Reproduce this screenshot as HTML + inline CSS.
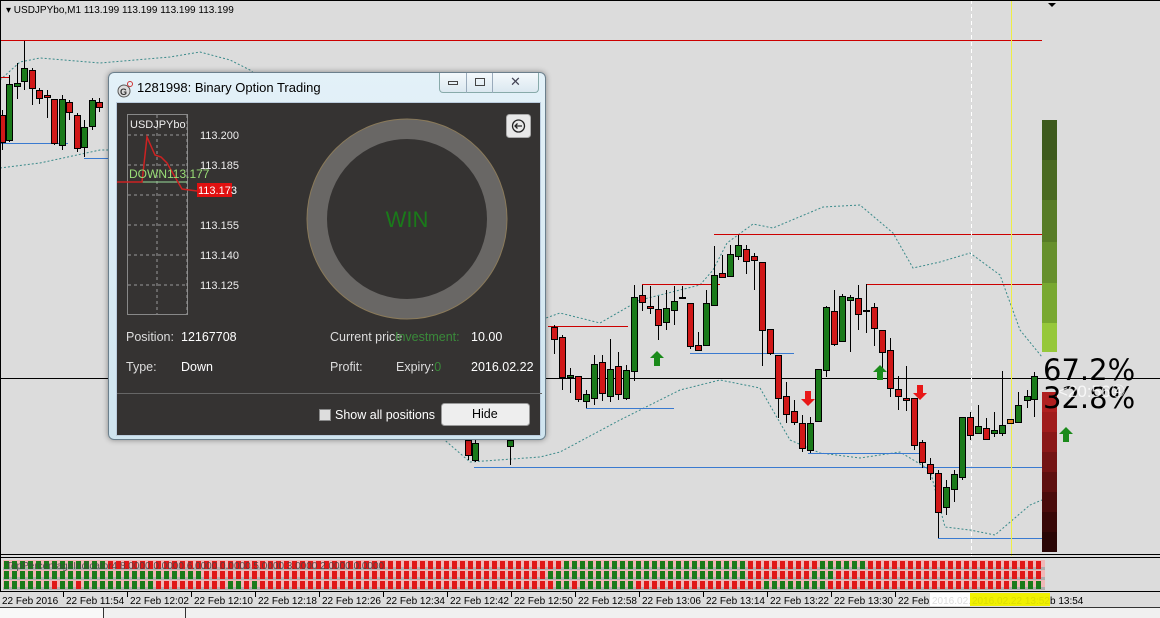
<!DOCTYPE html>
<html><head><meta charset="utf-8"><style>
*{margin:0;padding:0;box-sizing:border-box}
body{width:1160px;height:618px;overflow:hidden;background:#dcdcdc;font-family:"Liberation Sans",sans-serif;position:relative}
svg{position:absolute;left:0;top:0}
.dlg{position:absolute;left:108px;top:72px;width:438px;height:368px;background:linear-gradient(#e3f1f8,#cfe4ef);border:1px solid #6b7f8c;border-radius:6px;box-shadow:0 0 6px rgba(0,0,0,.4)}
.ttl{position:absolute;left:28px;top:7px;font-size:13px;color:#000}
.btns{position:absolute;right:6px;top:0;width:100px;height:20px;border:1px solid #8aa;border-top:none;border-radius:0 0 4px 4px;background:linear-gradient(#f4f9fc,#dbe8f0)}
.inner{position:absolute;left:7px;top:29px;width:425px;height:334px;background:#353332;border:1px solid #bcd}
.t{position:absolute;color:#ddd;font-size:12.5px;white-space:nowrap}
.w{color:#fff}
</style></head><body>
<svg id="s" width="1160" height="618"></svg>
<div class="dlg">
 <svg width="20" height="20" style="left:6px;top:6px"><circle cx="9" cy="12" r="6" fill="#ddd" stroke="#555"/><text x="5" y="16" font-size="9" font-weight="bold" fill="#333">G</text><circle cx="15" cy="5" r="2.5" fill="none" stroke="#c33"/></svg>
 <div class="ttl">1281998: Binary Option Trading</div>
 <div class="btns"><div style="position:absolute;left:8px;top:8px;width:10px;height:4px;border:1px solid #444"></div><div style="position:absolute;left:26px;top:0;width:1px;height:20px;background:#9ab"></div><div style="position:absolute;left:35px;top:5px;width:10px;height:8px;border:1px solid #444"></div><div style="position:absolute;left:52px;top:0;width:1px;height:20px;background:#9ab"></div><div style="position:absolute;left:70px;top:1px;font-size:13px;color:#445">✕</div></div>
 <div class="inner">
  <svg width="425" height="334">
   <rect x="10.5" y="11.5" width="60" height="200" fill="none" stroke="#888"/>
   <g stroke="#999" stroke-dasharray="3,3"><line x1="40" y1="12" x2="40" y2="211"/><line x1="70" y1="12" x2="70" y2="211"/>
   <line x1="11" y1="32" x2="70" y2="32"/><line x1="11" y1="62" x2="70" y2="62"/><line x1="11" y1="92" x2="70" y2="92"/><line x1="11" y1="122" x2="70" y2="122"/><line x1="11" y1="152" x2="70" y2="152"/><line x1="11" y1="182" x2="70" y2="182"/></g>
   <line x1="11" y1="79" x2="70" y2="79" stroke="#9d9"/>
   <polyline points="0,79 25,79 30,34 38,52 44,54 50,60 58,74 65,86 80,88" fill="none" stroke="#c22" stroke-width="1.5"/>
   <text x="13" y="25" font-size="11" fill="#eee" font-family="Liberation Sans">USDJPYbo</text>
   <text x="12" y="75" font-size="12" fill="#9d7">DOWN113.177</text>
   <g font-size="11" fill="#eee" font-family="Liberation Sans"><text x="83" y="36">113.200</text><text x="83" y="66">113.185</text><text x="83" y="126">113.155</text><text x="83" y="156">113.140</text><text x="83" y="186">113.125</text></g>
   <rect x="80" y="80" width="35" height="14" fill="#e01010"/><text x="81" y="91" font-size="11" fill="#fff">113.173</text>
   <circle cx="290" cy="116" r="90" fill="none" stroke="#696765" stroke-width="20"/>
   <circle cx="290" cy="116" r="100" fill="none" stroke="#8a7a5a" stroke-width="1"/>
   <text x="290" y="124" text-anchor="middle" font-size="22" fill="#1a7a1a">WIN</text>
   <rect x="389.5" y="11.5" width="24" height="23" rx="3" fill="#e8e8e8" stroke="#aaa"/>
   <circle cx="401.5" cy="23" r="6" fill="none" stroke="#222" stroke-width="1.3"/><path d="M405 23h-7M400.5 20.5l-2.5 2.5 2.5 2.5" stroke="#222" fill="none" stroke-width="1.3"/>
   <line x1="0" y1="290.5" x2="425" y2="290.5" stroke="#666"/>
   <rect x="202.5" y="306.5" width="11" height="11" fill="#ddd" stroke="#888"/>
   <rect x="324.5" y="300.5" width="88" height="22" rx="3" fill="#eee" stroke="#999"/>
  </svg>
  <div class="t" style="left:9px;top:227px">Position:</div><div class="t w" style="left:64px;top:227px">12167708</div>
  <div class="t" style="left:9px;top:257px">Type:</div><div class="t w" style="left:64px;top:257px">Down</div>
  <div class="t" style="left:213px;top:227px">Current price</div><div class="t" style="left:278px;top:227px;color:#3a8a3a">Investment:</div><div class="t w" style="left:354px;top:227px">10.00</div>
  <div class="t" style="left:213px;top:257px">Profit:</div><div class="t" style="left:279px;top:257px">Expiry:<span style="color:#3a8a3a">0</span></div><div class="t w" style="left:354px;top:257px">2016.02.22</div>
  <div class="t w" style="left:218px;top:305px">Show all positions</div>
  <div class="t" style="left:355px;top:304px;color:#000">Hide</div>
 </div>
</div>
<script>
var s=document.getElementById('s'),h='';
function R(x,y,w,hh,c){h+='<rect x="'+x+'" y="'+y+'" width="'+w+'" height="'+hh+'" fill="'+c+'"/>'}
function L(x1,y1,x2,y2,c,extra){h+='<line x1="'+x1+'" y1="'+y1+'" x2="'+x2+'" y2="'+y2+'" stroke="'+c+'" '+(extra||'')+'/>'}
h+='<text x="6" y="13" font-size="10" fill="#000" font-family="Liberation Sans">▾ USDJPYbo,M1  113.199 113.199 113.199 113.199</text>';
h+='<path d="M1048 3h8l-4 4z" fill="#000"/>';
h+='<polyline fill="none" stroke="#3a8a8a" stroke-dasharray="2,2" points="0,80 20,62 40,58 100,63 170,57 200,52 230,60 250,70 546,318 560,313 600,323 640,300 700,285 713,270 727,243 753,224 773,228 823,207 860,205 893,233 913,268 940,262 970,253 1000,275 1020,330 1042,357"/>';
h+='<polyline fill="none" stroke="#3a8a8a" stroke-dasharray="2,2" points="0,168 40,163 100,150 110,150 470,462 540,457 560,452 620,420 680,390 720,380 760,388 790,440 820,453 860,458 900,452 930,470 945,527 970,530 995,535 1030,505 1042,500"/>';
L(0,40.5,1042,40.5,'#c00');L(0,77.5,10,77.5,'#c00');L(714,234.5,1042,234.5,'#c00');L(866,284.5,1042,284.5,'#c00');L(642,284.5,720,284.5,'#c00');L(548,326.5,628,326.5,'#c00');
L(0,143.5,68,143.5,'#3a7ad0');L(84,158.5,108,158.5,'#3a7ad0');L(586,408.5,674,408.5,'#3a7ad0');L(690,353.5,794,353.5,'#3a7ad0');L(808,453.5,922,453.5,'#3a7ad0');L(474,467.5,1042,467.5,'#3a7ad0');L(938,538.5,1042,538.5,'#3a7ad0');
L(0,378.5,1160,378.5,'#000');
L(971.5,0,971.5,556,'#fff','stroke-dasharray="4,3"');L(1011.5,0,1011.5,556,'#ee4');
var C=[[2,115,142,110,150,'r'],[9,84,140,75,142,'g'],[17,83,86,63,99,'g'],[24,68,81,41,90,'g'],[32,70,88,68,105,'r'],[39,90,98,88,104,'r'],[47,95,97,90,118,'r'],[54,99,143,99,145,'r'],[62,99,145,95,150,'g'],[69,102,112,100,120,'r'],[77,115,148,113,152,'r'],[84,127,147,120,157,'g'],[92,100,126,98,130,'g'],[99,102,107,98,112,'r'],
[468,440,455,432,460,'r'],[475,443,460,440,462,'g'],[510,440,446,430,465,'g'],
[554,327,339,325,354,'r'],[562,337,377,335,390,'r'],[570,375,377,368,393,'g'],[578,376,399,376,402,'r'],[586,394,401,390,408,'g'],[594,364,398,355,405,'g'],[602,362,393,355,401,'r'],[610,369,396,339,402,'g'],[618,366,394,352,400,'r'],[626,370,398,365,400,'g'],[634,297,371,285,381,'g'],[642,295,302,285,311,'r'],[650,306,308,286,314,'r'],[658,309,325,296,340,'r'],[666,308,322,290,330,'g'],[674,301,310,286,325,'g'],[682,297,298,286,298,'g'],[690,303,346,303,349,'r'],[698,345,350,332,351,'r'],[706,303,345,290,345,'g'],[714,275,305,246,305,'g'],[722,273,277,255,277,'r'],[730,254,276,245,276,'g'],[738,245,256,235,260,'g'],[746,249,261,245,274,'r'],[754,256,260,253,290,'r'],[762,262,330,262,366,'r'],[770,329,353,329,355,'r'],[778,355,398,355,418,'r'],[786,396,414,382,423,'r'],[794,411,422,400,425,'r'],[802,423,448,415,452,'r'],[810,423,450,417,453,'g'],[818,369,421,369,421,'g'],[826,307,370,306,377,'g'],[834,311,344,290,346,'r'],[842,296,341,294,342,'g'],[850,297,300,295,352,'g'],[858,298,314,285,330,'r'],[866,310,311,284,333,'g'],[874,307,328,303,346,'r'],[882,330,352,330,378,'r'],[890,350,388,338,397,'r'],[898,389,396,376,410,'r'],[906,398,400,366,411,'r'],[914,398,445,398,450,'r'],[922,442,462,440,468,'r'],[930,464,473,458,480,'r'],[938,473,512,470,538,'r'],[946,487,507,480,515,'g'],[954,474,489,470,502,'g'],[962,417,477,417,480,'g'],[970,417,435,412,440,'r'],[978,426,433,405,433,'g'],[986,428,439,418,440,'r'],[994,430,433,412,437,'g'],[1002,425,433,371,436,'g'],[1010,419,423,419,423,'o'],[1018,405,422,392,422,'g'],[1027,396,400,390,408,'g'],[1034,376,399,372,417,'g']];
C.forEach(function(c){var col=c[5]=='r'?'#d01818':c[5]=='g'?'#1a7a1a':'#e08020';L(c[0]+0.5,c[3],c[0]+0.5,c[4],'#000');h+='<rect x="'+(c[0]-2.5)+'" y="'+c[1]+'.5" width="6" height="'+Math.max(1,c[2]-c[1])+'" fill="'+col+'" stroke="#000" stroke-width="1"/>';});
function up(x,y){h+='<path d="M'+x+' '+y+'l-7 7h4v8h6v-8h4z" fill="#1a8a1a"/>'}
function dn(x,y){h+='<path d="M'+x+' '+y+'l-7 -7h4v-8h6v8h4z" fill="#e81818"/>'}
up(657,351);up(880,365);up(1066,427);dn(808,406);dn(920,400);
var gs=['#3e5a1e','#4a6a22','#577c26','#66902c','#78a830','#96c83a'],gy=[120,160,200,242,283,323,352];
for(var i=0;i<6;i++)R(1042,gy[i],15,gy[i+1]-gy[i],gs[i]);
var rs=['#b02020','#a01c1c','#8a1818','#741414','#5e1010','#4a0c0c','#380808','#2a0606'];
for(i=0;i<8;i++)R(1042,392+i*20,15,20,rs[i]);
h+='<text x="1043" y="380" font-size="29" fill="#000" font-family="DejaVu Sans">67.2%</text>';
h+='<text x="1043" y="408" font-size="29" fill="#000" font-family="DejaVu Sans">32.8%</text>';
h+='<text x="1058" y="397" font-size="17" fill="#fff" opacity=".8" font-family="Liberation Sans">&lt;20:56④</text>';
L(0,554.5,1160,554.5,'#000');L(0,557.5,1160,557.5,'#000');R(0,558,1160,34,'#dcdcdc');
var rows=[[[0,12,'g'],[13,69,'r'],[70,92,'g'],[93,101,'r'],[102,107,'g'],[108,130,'r']],
[[0,24,'g'],[25,67,'r'],[68,92,'g'],[93,100,'r'],[101,103,'g'],[104,130,'r']],
[[0,18,'g'],[19,27,'r'],[28,29,'g'],[30,30,'r'],[31,31,'g'],[32,67,'r'],[68,73,'g'],[74,78,'g'],[79,94,'r'],[95,102,'g'],[103,125,'r'],[126,130,'g']]];
var redx={6:1,9:1,21:1,22:1,68:1,71:1,84:1,87:1};
for(var r=0;r<3;r++){R(3,560+r*10,1042,10,'#f0b8b8');R(3,567+r*10,1042,3,'#b0b0b0');
 for(var k=0;k<130;k++){var col='r';rows[r].forEach(function(g){if(k>=g[0]&&k<=g[1])col=g[2]});if(r==2&&redx[k])col='r';
  R(4+k*8,561+r*10,5,8,col=='g'?'#1a7a1a':'#e01818');}}
h+='<text x="6" y="569" font-size="10" fill="#444" opacity=".85" font-family="Liberation Sans">TopPercentageIndicator4 8.0000 0.0000 6.0000 0.0000 5.0000 3.0000 2.0000 0.0000</text>';
L(0,591.5,1160,591.5,'#000');
var lab=['22 Feb 2016','22 Feb 11:54','22 Feb 12:02','22 Feb 12:10','22 Feb 12:18','22 Feb 12:26','22 Feb 12:34','22 Feb 12:42','22 Feb 12:50','22 Feb 12:58','22 Feb 13:06','22 Feb 13:14','22 Feb 13:22','22 Feb 13:30','22 Feb'];
lab.forEach(function(t,i){var x=2+i*64;if(i>0)L(x-2.5,592,x-2.5,597,'#000');h+='<text x="'+x+'" y="604" font-size="10" fill="#000" font-family="Liberation Sans">'+t+'</text>'});
R(930,593,40,13,'#fff');R(970,593,80,13,'#f0f000');
h+='<text x="932" y="604" font-size="10" fill="#ddd" font-family="Liberation Sans">2016.02.</text><text x="972" y="604" font-size="10" fill="#dd0" font-family="Liberation Sans">2016.02.22 13:52</text><text x="1050" y="604" font-size="10" fill="#000" font-family="Liberation Sans">b 13:54</text>';
R(0,607,1160,11,'#f0f0f0');L(0,607.5,1160,607.5,'#333');R(0,608,103,10,'#f8f8f8');L(103.5,608,103.5,618,'#333');L(185.5,608,185.5,618,'#333');
L(0,0.5,1160,0.5,'#000');L(0.5,0,0.5,592,'#000');
s.innerHTML=h;
</script>
</body></html>
